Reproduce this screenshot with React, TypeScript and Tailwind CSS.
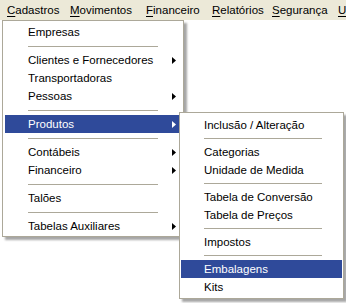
import React from 'react'

type Entry = { label?: string; sep?: boolean; arrow?: boolean; active?: boolean }

const main: Entry[] = [
  { label: 'Empresas' },
  { sep: true },
  { label: 'Clientes e Fornecedores', arrow: true },
  { label: 'Transportadoras' },
  { label: 'Pessoas', arrow: true },
  { sep: true },
  { label: 'Produtos', arrow: true, active: true },
  { sep: true },
  { label: 'Contábeis', arrow: true },
  { label: 'Financeiro', arrow: true },
  { sep: true },
  { label: 'Talões' },
  { sep: true },
  { label: 'Tabelas Auxiliares', arrow: true },
]

const sub: Entry[] = [
  { label: 'Inclusão / Alteração' },
  { sep: true },
  { label: 'Categorias' },
  { label: 'Unidade de Medida' },
  { sep: true },
  { label: 'Tabela de Conversão' },
  { label: 'Tabela de Preços' },
  { sep: true },
  { label: 'Impostos' },
  { sep: true },
  { label: 'Embalagens', active: true },
  { label: 'Kits' },
]

const bar = [
  { k: 'C', rest: 'adastros', w: 'w-[63px]' },
  { k: 'M', rest: 'ovimentos', w: 'w-[76px]' },
  { k: 'F', rest: 'inanceiro', w: 'w-[66px]' },
  { k: 'R', rest: 'elatórios', w: 'w-[60px]' },
  { k: 'S', rest: 'egurança', w: 'w-[66px]' },
  { k: 'U', rest: 'tilitários', w: 'w-[80px]' },
]

function Arrow({ white }: { white?: boolean }) {
  return (
    <svg width="4" height="7" viewBox="0 0 4 7" className="shrink-0">
      <path d="M0 0 L4 3.5 L0 7 Z" fill={white ? '#fff' : '#000'} />
    </svg>
  )
}

function MenuList({ items, sepH, sepW }: { items: Entry[]; sepH: string; sepW: string }) {
  return (
    <>
      {items.map((it, i) =>
        it.sep ? (
          <div key={i} className={`${sepH} flex items-center pl-[23px]`}>
            <div className={`h-px ${sepW} bg-[#aca899]`} />
          </div>
        ) : (
          <div key={i} className={`h-[18px] flex items-center pl-[23px] pr-[5px] ${it.active ? 'bg-[#2f4a9a] text-white' : 'text-black'}`}>
            <span className="flex-1 whitespace-nowrap pt-px">{it.label}</span>
            {it.arrow && <Arrow white={it.active} />}
          </div>
        )
      )}
    </>
  )
}

export default function App() {
  return (
    <div className="relative w-[346px] h-[303px] bg-white overflow-hidden text-[11.5px] leading-none" style={{ fontFamily: '"Liberation Sans", Arial, sans-serif' }}>
      <div className="h-[20px] bg-[#ece9d8] flex items-center pl-[2px] whitespace-nowrap overflow-hidden">
        {bar.map(b => (
          <div key={b.k} className={`${b.w} shrink-0 pl-[5px] pt-[2px]`}>
            <span className="underline underline-offset-[2px]">{b.k}</span>{b.rest}
          </div>
        ))}
      </div>

      <div className="absolute left-[2px] top-[20px] w-[182px] bg-white border border-[#aca899] pt-[2px] pb-[1px] px-[2px] shadow-[3px_3px_2px_rgba(0,0,0,0.35)]">
        <MenuList items={main} sepH="h-[10px]" sepW="w-[130px]" />
      </div>

      <div className="absolute left-[179px] top-[112px] w-[165px] bg-white border border-[#aca899] pt-[3px] pb-[2px] px-px shadow-[3px_3px_2px_rgba(0,0,0,0.35)]">
        <MenuList items={sub} sepH="h-[9px]" sepW="w-[118px]" />
      </div>
    </div>
  )
}
